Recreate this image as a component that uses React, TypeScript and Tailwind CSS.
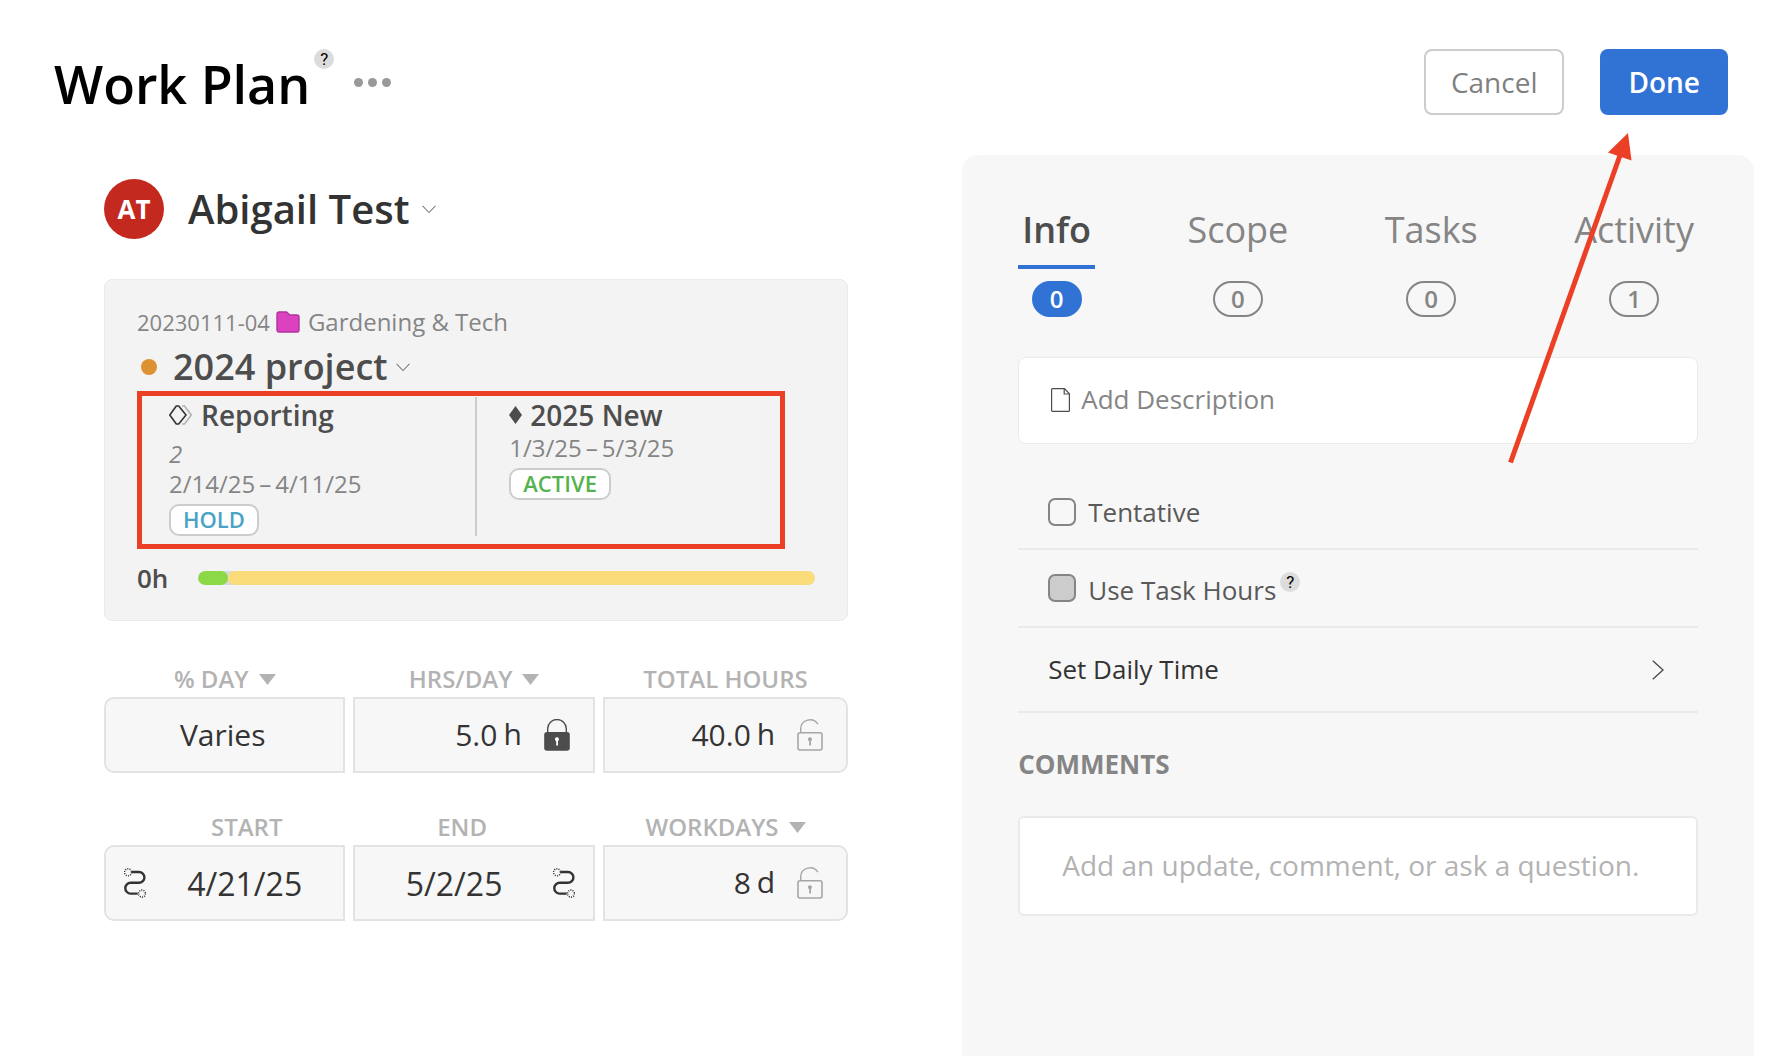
import React from 'react';

const tabs = [
  { name: 'Info', count: 0, active: true },
  { name: 'Scope', count: 0, active: false },
  { name: 'Tasks', count: 0, active: false },
  { name: 'Activity', count: 1, active: false },
];

function HelpBadge() {
  return (
    <button
      type="button"
      aria-label="Help"
      className="flex size-5 items-center justify-center rounded-full bg-[#dcdcdc] font-['Roboto',sans-serif] text-[17px] leading-5 text-black"
    >
      ?
    </button>
  );
}

function ChevronDown() {
  return (
    <svg width="14" height="9" viewBox="0 0 14 9" fill="none" stroke="#4d4d4d" aria-hidden="true">
      <path d="M0.5 0.8 L7 7.6 L13.5 0.8" />
    </svg>
  );
}

function FolderIcon() {
  return (
    <svg width="24" height="22" viewBox="0 0 24 22" aria-hidden="true">
      <path
        d="M1 3 a2 2 0 0 1 2-2 h7.5 l3.5 3 h7 a2 2 0 0 1 2 2 v13 a2 2 0 0 1-2 2 h-18 a2 2 0 0 1-2-2 z"
        fill="#dc42c0"
        stroke="#b0359b"
        strokeWidth="1.4"
      />
    </svg>
  );
}

function PhaseIcon() {
  return (
    <svg width="24" height="20" viewBox="0 0 24 20" fill="none" aria-hidden="true">
      <path d="M13 1 h2.5 l6.8 9 l-6.8 9 h-2.5" stroke="#b3b3b3" strokeWidth="1.6" />
      <path d="M7.3 1 h2.4 L17 10 L9.7 19 h-2.4 L0.8 10 z" stroke="#333" strokeWidth="1.6" strokeLinejoin="round" />
    </svg>
  );
}

function DiamondIcon() {
  return (
    <svg width="13" height="18" viewBox="0 0 13 18" fill="#4d4d4d" aria-hidden="true">
      <path d="M6.5 0 L13 9 L6.5 18 L0 9 z" />
    </svg>
  );
}

function LockIcon({ locked }: { locked: boolean }) {
  const color = locked ? '#4d4d4d' : '#a6a6a6';
  return (
    <svg width="26" height="32" viewBox="0 0 26 32" fill="none" stroke={color} aria-hidden="true">
      <path
        d={locked ? 'M3.7 14 V9.5 a9.3 9 0 0 1 18.6 0 V14' : 'M3.7 14 V9.5 a9.3 9 0 0 1 17.2 -4.4'}
        strokeWidth="1.4"
      />
      <rect x="1" y="13.8" width="24" height="17.2" rx="2" strokeWidth="1.6" fill={locked ? color : 'none'} />
      <path
        d="M11 20.5 a2 2 0 1 1 3 1.4 V26.5 h-1.8 V22.2 a2 2 0 0 1 -1.2 -1.7 z"
        fill={locked ? '#fff' : color}
        stroke="none"
      />
    </svg>
  );
}

function PathIcon() {
  return (
    <svg width="22" height="30" viewBox="0 0 22 30" fill="none" stroke="#333" aria-hidden="true">
      <path d="M7.5 4 h7.5 a5.3 5.3 0 0 1 0 10.8 h-8.3 a5.4 5.4 0 0 0 0 10.8 h7" strokeWidth="2.4" />
      <circle cx="4" cy="4.3" r="3.5" strokeWidth="1.6" strokeDasharray="1 1.2" />
      <circle cx="18" cy="25.6" r="3.5" strokeWidth="1.6" strokeDasharray="1 1.2" />
    </svg>
  );
}

function Caret() {
  return (
    <svg width="17" height="11" viewBox="0 0 17 11" fill="#b3b3b3" aria-hidden="true">
      <path d="M0 0 H17 L8.5 11 z" />
    </svg>
  );
}

interface FieldProps {
  id: string;
  label: string;
  value: string;
  caret?: boolean;
  unit?: string;
  locked?: boolean;
  labelClass?: string;
  boxClass?: string;
  inputClass: string;
  before?: React.ReactNode;
  after?: React.ReactNode;
}

function Field({ id, label, value, caret, unit, locked, labelClass = '', boxClass = '', inputClass, before, after }: FieldProps) {
  return (
    <div className="min-w-0">
      <div className={`flex items-center justify-center gap-[10px] ${labelClass}`}>
        <label htmlFor={id} className="text-[24px] leading-9 font-semibold text-[#b3b3b3]">
          {label}
        </label>
        {caret && <Caret />}
      </div>
      <div className={`flex h-[76px] items-center border-2 border-[#e3e3e3] bg-[#f7f7f7] text-[#333] ${boxClass}`}>
        {before}
        <input id={id} defaultValue={value} className={`min-w-0 flex-1 bg-transparent outline-none ${inputClass}`} />
        {unit && <span className="ml-[6px] pb-[2px] text-[30px] leading-10">{unit}</span>}
        {locked !== undefined && (
          <button type="button" aria-label={locked ? 'Unlock' : 'Lock'} className="mr-[23px] ml-[22px]">
            <LockIcon locked={locked} />
          </button>
        )}
        {after}
      </div>
    </div>
  );
}

function Header() {
  return (
    <header className="flex items-center justify-between pt-[49px] pr-[46px] pb-10 pl-[54px]">
      <div className="flex items-center">
        <h1 className="pt-1 text-[52px] leading-[62px] font-semibold text-black">Work Plan</h1>
        <div className="ml-1 self-start">
          <HelpBadge />
        </div>
        <button type="button" aria-label="More" className="ml-5 flex gap-[5px]">
          <span className="size-[9px] rounded-full bg-[#999]" />
          <span className="size-[9px] rounded-full bg-[#999]" />
          <span className="size-[9px] rounded-full bg-[#999]" />
        </button>
      </div>
      <div className="flex gap-9">
        <button type="button" className="h-[66px] rounded-lg border-2 border-[#ccc] px-[25px] text-[28px] text-[#808080]">
          Cancel
        </button>
        <button type="button" className="h-[66px] rounded-lg bg-[#3173d5] px-7 text-[28px] font-semibold text-white">
          Done
        </button>
      </div>
    </header>
  );
}

function ProjectCard() {
  return (
    <div className="mt-10 rounded-lg border border-[#eaeaea] bg-[#f3f3f3] px-8 pt-[26px] pb-[25px]">
      <div className="flex items-center text-[24px] leading-8 text-[#858585]">
        <span className="mr-[6px] text-[22px]">20230111-04</span>
        <FolderIcon />
        <span className="ml-2">Gardening &amp; Tech</span>
      </div>
      <div className="mt-[5px] flex items-center">
        <span className="ml-1 size-4 rounded-full bg-[#dc9233]" />
        <h3 className="mr-2 ml-4 text-[36px] leading-[48px] font-semibold text-[#4d4d4d]">2024 project</h3>
        <ChevronDown />
      </div>

      <div className="relative mr-[30px] grid grid-cols-[21fr_19fr] pt-[6px] pb-[13px] text-[24px] leading-[30px] text-[#858585]">
        <div className="border-r-2 border-[#ccc] pl-8">
          <div className="flex items-center gap-2">
            <PhaseIcon />
            <h4 className="text-[28px] leading-9 font-semibold text-[#4d4d4d]">Reporting</h4>
          </div>
          <p className="mt-[6px] italic">2</p>
          <p>2/14/25&#8201;–&#8201;4/11/25</p>
          <div className="mt-[5px] inline-block rounded-[10px] border-2 border-[#ccc] bg-white px-3 pb-[2px] text-[22px] leading-[26px] font-semibold text-[#4aa3c7]">
            HOLD
          </div>
        </div>
        <div className="pl-8">
          <div className="flex items-center gap-2">
            <DiamondIcon />
            <h4 className="text-[28px] leading-9 font-semibold text-[#4d4d4d]">2025 New</h4>
          </div>
          <p>1/3/25&#8201;–&#8201;5/3/25</p>
          <div className="mt-[5px] inline-block rounded-[10px] border-2 border-[#ccc] bg-white px-3 pb-[2px] text-[22px] leading-[26px] font-semibold text-[#56b24e]">
            ACTIVE
          </div>
        </div>
        {/* red highlight drawn over the phases */}
        <div className="pointer-events-none absolute inset-0 border-5 border-[#ec4026]" />
      </div>

      <div className="mt-3 flex items-center">
        <span className="w-[61px] text-[26px] leading-[34px] font-semibold text-[#4d4d4d]">0h</span>
        <div className="flex h-[14px] flex-1 overflow-hidden rounded-full bg-[#d9d9d9]">
          <div className="w-[30px] rounded-full bg-[#8bd946]" />
          <div className="flex-1 rounded-full bg-[#fadd7a]" />
        </div>
      </div>
    </div>
  );
}

function PlanForm() {
  return (
    <section className="pt-6">
      <div className="flex items-center">
        <div className="flex size-[60px] items-center justify-center rounded-full bg-[#c4291f] text-[26px] font-bold text-white">
          AT
        </div>
        <h2 className="mr-3 ml-6 text-[40px] leading-[60px] font-semibold text-[#333]">Abigail Test</h2>
        <ChevronDown />
      </div>

      <ProjectCard />

      <div className="mt-10 grid grid-cols-[60fr_60fr_61fr] gap-2">
        <Field id="day" label="% DAY" value="Varies" caret boxClass="rounded-l-[10px]" inputClass="pb-[2px] pr-1 text-center text-[30px]" />
        <Field id="hrs" label="HRS/DAY" value="5.0" caret unit="h" locked inputClass="pb-[2px] text-right text-[30px]" />
        <Field id="total" label="TOTAL HOURS" value="40.0" unit="h" locked={false} boxClass="rounded-r-[10px]" inputClass="pb-[2px] text-right text-[30px]" />
      </div>
      <div className="mt-9 grid grid-cols-[60fr_60fr_61fr] gap-2">
        <Field
          id="start"
          label="START"
          value="4/21/25"
          labelClass="pl-11"
          boxClass="rounded-l-[10px] pl-[18px]"
          inputClass="pt-[2px] text-center text-[32px]"
          before={<PathIcon />}
        />
        <Field
          id="end"
          label="END"
          value="5/2/25"
          labelClass="pr-6"
          boxClass="pr-[18px]"
          inputClass="pt-[2px] text-center text-[32px]"
          after={<PathIcon />}
        />
        <Field id="workdays" label="WORKDAYS" value="8" caret unit="d" locked={false} boxClass="rounded-r-[10px]" inputClass="pb-[2px] text-right text-[30px]" />
      </div>
    </section>
  );
}

function DetailsPanel() {
  return (
    <aside className="relative rounded-t-2xl bg-[#f7f7f7] px-14 pt-[50px]">
      <div role="tablist" className="flex justify-between">
        {tabs.map((tab) => (
          <button key={tab.name} type="button" role="tab" aria-selected={tab.active} className="flex flex-col items-center">
            <span
              className={`border-b-4 px-1 pb-[10px] text-[36px] leading-[50px] ${
                tab.active ? 'border-[#3173d5] font-semibold text-[#4d4d4d]' : 'border-transparent text-[#858585]'
              }`}
            >
              {tab.name}
            </span>
            <span
              className={`mt-3 h-9 w-[50px] rounded-full border-2 text-[24px] leading-8 font-semibold ${
                tab.active ? 'border-[#3173d5] bg-[#3173d5] text-white' : 'border-[#858585] text-[#858585]'
              }`}
            >
              {tab.count}
            </span>
          </button>
        ))}
      </div>

      <button
        type="button"
        className="mt-10 flex h-[87px] w-full items-center gap-[11px] rounded-lg border border-[#eaeaea] bg-white px-8 pb-[2px] text-[26px] text-[#858585]"
      >
        <svg width="19" height="24" viewBox="0 0 19 24" fill="none" stroke="#4d4d4d" strokeWidth="1.2" aria-hidden="true">
          <path d="M1.6 0.6 H13.5 L18.4 5.8 V22.4 a1 1 0 0 1 -1 1 H1.6 a1 1 0 0 1 -1 -1 V1.6 a1 1 0 0 1 1 -1 z" />
          <path d="M13.2 0.6 V6 H18.4" />
        </svg>
        Add Description
      </button>

      <div className="mt-8 flex h-[74px] items-center border-b-2 border-[#eaeaea] px-[30px]">
        <input
          id="tentative"
          type="checkbox"
          className="size-7 appearance-none rounded-[7px] border-2 border-[#858585] checked:bg-[#3173d5]"
        />
        <label htmlFor="tentative" className="ml-3 text-[26px] leading-9 text-[#595959]">
          Tentative
        </label>
      </div>
      <div className="flex h-[78px] items-center border-b-2 border-[#eaeaea] px-[30px]">
        <input
          id="task-hours"
          type="checkbox"
          disabled
          className="size-7 appearance-none rounded-[7px] border-2 border-[#858585] bg-[#ccc]"
        />
        <label htmlFor="task-hours" className="mt-1 mr-1 ml-3 text-[26px] leading-9 text-[#595959]">
          Use Task Hours
        </label>
        <div className="pb-3">
          <HelpBadge />
        </div>
      </div>
      <button
        type="button"
        className="flex h-[85px] w-full items-center justify-between border-b-2 border-[#eaeaea] pr-[34px] pl-[30px] text-[26px] text-[#333]"
      >
        Set Daily Time
        <svg width="12" height="20" viewBox="0 0 12 20" fill="none" stroke="#4d4d4d" strokeWidth="1.4" aria-hidden="true">
          <path d="M0.8 0.8 L11 10 L0.8 19.2" />
        </svg>
      </button>

      <label htmlFor="comment" className="my-8 block text-[26px] leading-[39px] font-bold text-[#858585]">
        COMMENTS
      </label>
      <input
        id="comment"
        type="text"
        placeholder="Add an update, comment, or ask a question."
        className="block h-[100px] w-full rounded-md border-2 border-[#eaeaea] bg-white px-[42px] pb-[2px] text-[28px] text-[#333] outline-none placeholder:text-[#b3b3b3]"
      />

      {/* arrow pointing at the Done button */}
      <svg
        className="pointer-events-none absolute -top-[25px] right-[114px]"
        width="140"
        height="340"
        viewBox="0 0 140 340"
        aria-hidden="true"
      >
        <path d="M10.5 332.5 L120.5 24" stroke="#ec4026" strokeWidth="5" />
        <path d="M128 3 L108 22.5 L131.5 30.5 z" fill="#ec4026" />
      </svg>
    </aside>
  );
}

function App() {
  return (
    <div className="flex min-h-screen flex-col bg-white font-['Open_Sans',sans-serif]">
      <Header />
      <main className="grid flex-1 grid-cols-[47fr_50fr] gap-[114px] pr-5 pl-[104px]">
        <PlanForm />
        <DetailsPanel />
      </main>
    </div>
  );
}

export default App;
